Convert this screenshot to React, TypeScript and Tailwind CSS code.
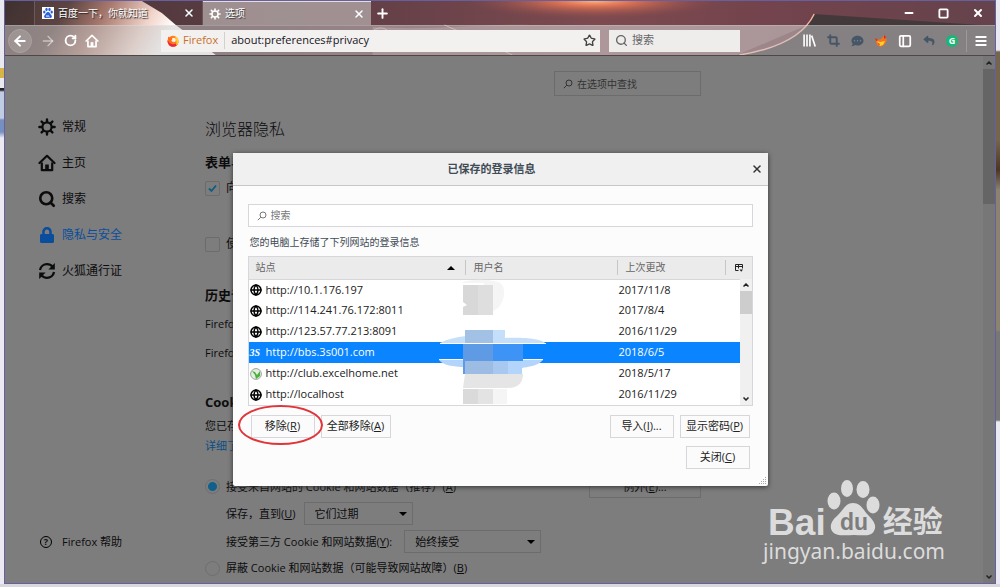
import React from "react";
import {
  Search,
  Plus,
  X,
  Minus,
  Square,
  ArrowLeft,
  ArrowRight,
  RotateCw,
  Star,
  Menu,
  Crop,
  Globe,
  PanelLeft,
} from "lucide-react";
import { FaLock, FaCommentDots, FaReply } from "react-icons/fa";

const sites = [
  { url: "http://10.1.176.197", date: "2017/11/8", icon: "globe" },
  { url: "http://114.241.76.172:8011", date: "2017/8/4", icon: "globe" },
  { url: "http://123.57.77.213:8091", date: "2016/11/29", icon: "globe" },
  { url: "http://bbs.3s001.com", date: "2018/6/5", icon: "3s", selected: true },
  { url: "http://club.excelhome.net", date: "2018/5/17", icon: "excel" },
  { url: "http://localhost", date: "2016/11/29", icon: "globe" },
];

const Gear = ({ className }: { className: string }) => (
  <svg viewBox="0 0 18 18" className={className} fill="none" stroke="currentColor">
    <circle cx="9" cy="9" r="4.6" strokeWidth="2.2" />
    <g strokeWidth="2.4" strokeLinecap="round">
      <path d="M9 1.4v2.4M9 14.2v2.4M1.4 9h2.4M14.2 9h2.4" />
      <path d="M3.6 3.6l1.6 1.6M12.8 12.8l1.6 1.6M3.6 14.4l1.6-1.6M12.8 5.2l1.6-1.6" />
    </g>
  </svg>
);

const House = ({ className }: { className: string }) => (
  <svg viewBox="0 0 18 18" className={className} fill="none" stroke="currentColor">
    <path d="M1.5 9L9 1.8 16.5 9" strokeWidth="2.2" strokeLinecap="round" strokeLinejoin="round" />
    <path d="M3.8 8.5v7.7h10.4V8.5" strokeWidth="2.2" strokeLinejoin="round" />
    <path d="M7.2 16v-5.5h3.6V16z" fill="currentColor" stroke="none" />
  </svg>
);

const SyncIcon = ({ className }: { className: string }) => (
  <svg viewBox="0 0 18 18" className={className} fill="none" stroke="currentColor" strokeWidth="2.3">
    <path d="M2 8c.6-3.500 3.500-5.800 7-5.800 2.400 0 4.300 1 5.600 2.700" />
    <path d="M16 10c-.6 3.500-3.500 5.800-7 5.800-2.400 0-4.300-1-5.600-2.700" />
    <path d="M16.800 1v6.400h-6.400z" fill="currentColor" stroke="none" />
    <path d="M1.200 17v-6.400h6.400z" fill="currentColor" stroke="none" />
  </svg>
);

const SmallSearch = ({ className }: { className: string }) => (
  <svg viewBox="0 0 10 10" className={className} fill="none" stroke="currentColor">
    <circle cx="6" cy="4" r="3" />
    <path d="M3.800 6.200L.8 9.200" />
  </svg>
);

const PawIcon = ({ className }: { className: string }) => (
  <svg viewBox="0 0 12 12" className={className}>
    <rect width="12" height="12" fill="#fff" />
    <g fill="#2a62d8">
      <ellipse cx="2.300" cy="5" rx="1.200" ry="1.600" />
      <ellipse cx="4.500" cy="2.500" rx="1.200" ry="1.700" />
      <ellipse cx="7.500" cy="2.500" rx="1.200" ry="1.700" />
      <ellipse cx="9.700" cy="5" rx="1.200" ry="1.600" />
      <path d="M6 5c2 0 2 2 3.200 3 1.600 1.600.2 3.400-1.600 3H4.400c-1.800.4-3.200-1.400-1.600-3C4 7 4 5 6 5z" />
    </g>
    <path d="M4.500 8.500h1v1.500h-1zM6.500 8v2h1.500" stroke="#fff" strokeWidth=".5" fill="none" />
  </svg>
);

const FirefoxLogo = ({ className }: { className: string }) => (
  <svg viewBox="0 0 12 12" className={className}>
    <circle cx="6" cy="6.300" r="5.500" fill="#ff7a18" />
    <path d="M.6 5C.3 9 3 11.800 6 11.800c3.200 0 5-2 5.500-4.500C9 10 3 10.500.6 5z" fill="#e8283c" />
    <path d="M7.500.5c2 1 4 3 4 5.800 0 2-1 3.500-2.500 4.500 1-3 .5-6-1.500-10.300z" fill="#ffcf2e" />
    <circle cx="6.600" cy="5" r="2.300" fill="#fff4e4" />
    <path d="M.8 3.500l.6-2 1.200 1.300C4 2.500 5 3 5.500 4L4 5.500c.5 1 1.500 1.600 3 1.200-1 1.800-4.500 1.300-5.200-1z" fill="#ff6a1a" />
  </svg>
);

// Lightweight theme artwork behind the tabs and the toolbar
const ThemeArt = () => (
  <svg
    viewBox="0 0 991 54"
    preserveAspectRatio="none"
    className="absolute inset-0 h-full w-full"
    aria-hidden="true"
  >
    <defs>
      <linearGradient id="sky" x1="0" x2="1" y1="0" y2="0">
        <stop offset="0" stopColor="#4a3839" />
        <stop offset=".3" stopColor="#5d3c44" />
        <stop offset=".46" stopColor="#6e444b" />
        <stop offset=".6" stopColor="#7d4a4f" />
        <stop offset=".75" stopColor="#74444d" />
        <stop offset="1" stopColor="#65434c" />
      </linearGradient>
      <linearGradient id="planet" x1="0" x2="1" y1="0" y2=".15">
        <stop offset="0" stopColor="#473736" />
        <stop offset=".3" stopColor="#5b4341" />
        <stop offset=".5" stopColor="#a8796e" />
        <stop offset=".72" stopColor="#f2d5cb" />
        <stop offset=".85" stopColor="#ffffff" />
      </linearGradient>
      <radialGradient id="sun">
        <stop offset="0" stopColor="#ffb27a" />
        <stop offset=".3" stopColor="#f07a55" stopOpacity=".8" />
        <stop offset="1" stopColor="#8c4a4c" stopOpacity="0" />
      </radialGradient>
    </defs>
    <rect width="991" height="54" fill="url(#sky)" />
    <ellipse cx="590" cy="0" rx="130" ry="18" fill="url(#sun)" />
    <path d="M368 26c60 4 110-4 160-2 90 0 200 0 275 0l-70 30H368z" fill="#a07c80" opacity=".6" />
    <path d="M0 0h137l20 12 14 12 40 30H0z" fill="url(#planet)" />
    <path d="M735 54c42-6 65-20 74-41l182 12v29z" fill="#43383a" />
    <path d="M735 54c44-7 66-22 75-41" fill="none" stroke="#f5b5a5" strokeWidth="1.500" />
    <path d="M440 24l68 30M368 30c8-6 14-2 18 2" fill="none" stroke="#e0b8b4" strokeWidth=".8" />
  </svg>
);

const BrowserChrome = () => (
  <header className="relative shrink-0 border-b border-[#514646] text-white">
    <ThemeArt />
    <div className="relative flex h-6 items-stretch text-[10px]">
      <div className="w-[30px] border-r border-[#6b5a5a] bg-black/10" />
      <div className="flex w-[168px] items-center gap-1 border-r border-[#6b5456] px-[7px]">
        <PawIcon className="h-3 w-3 shrink-0" />
        <span className="min-w-0 flex-1 overflow-hidden whitespace-nowrap [text-shadow:1px_1px_1px_#222]">
          百度一下，你就知道
        </span>
        <button aria-label="关闭标签页" className="shrink-0 pl-1">
          <X className="h-3 w-3 [filter:drop-shadow(0_0_1px_#444)]" strokeWidth={3} />
        </button>
      </div>
      <div className="flex w-[168px] items-center gap-1 border-t border-[#e5dcdc] bg-[#b0a5a5]/80 px-[6px]">
        <Gear className="h-3 w-3 shrink-0" />
        <span className="flex-1 [text-shadow:1px_1px_1px_#333]">选项</span>
        <button aria-label="关闭标签页" className="pl-1">
          <X className="h-3 w-3" strokeWidth={3} />
        </button>
      </div>
      <button aria-label="新建标签页" className="px-1">
        <Plus className="h-[15px] w-[15px]" strokeWidth={3} />
      </button>
      <div className="ml-auto flex items-center gap-[23px] pr-[11px]">
        <button aria-label="最小化">
          <Minus className="h-3 w-3" strokeWidth={4} />
        </button>
        <button aria-label="最大化">
          <Square className="h-[11px] w-[11px]" strokeWidth={4} />
        </button>
        <button aria-label="关闭">
          <X className="h-3 w-3" strokeWidth={4} />
        </button>
      </div>
    </div>
    <div className="relative flex h-[30px] items-center border-t border-white/20 bg-[#c8c8c8]/50">
      <div className="flex w-[156px] items-center gap-2 pl-[3px]">
        <button
          aria-label="后退"
          className="flex h-6 w-6 items-center justify-center rounded-full border border-[#aaa0a0] bg-white/15"
        >
          <ArrowLeft className="h-4 w-4" strokeWidth={3} />
        </button>
        <button aria-label="前进" className="text-white/50">
          <ArrowRight className="h-4 w-4" />
        </button>
        <button aria-label="重新载入">
          <RotateCw className="h-[13px] w-[13px]" strokeWidth={3.5} />
        </button>
        <button aria-label="主页">
          <House className="h-[14px] w-[14px]" />
        </button>
      </div>
      <div className="flex h-[22px] w-[439px] items-center bg-[#f3f0f0] pl-[6px] pr-1 text-[#15141a]">
        <FirefoxLogo className="h-3 w-3" />
        <span className="ml-1 border-r border-[#d5d0d0] pr-[6px] text-[11px] text-[#c8702a]">Firefox</span>
        <input
          aria-label="地址栏"
          defaultValue="about:preferences#privacy"
          className="min-w-0 flex-1 bg-transparent pl-[6px] text-[11px] outline-none"
        />
        <Star className="h-[13px] w-[13px] text-[#444]" strokeWidth={2.5} />
      </div>
      <label className="ml-[9px] flex h-[22px] w-[131px] items-center gap-1 bg-[#efecec] px-[6px] text-[#666]">
        <Search className="h-[13px] w-[13px] shrink-0" strokeWidth={2.5} />
        <input
          aria-label="搜索栏"
          placeholder="搜索"
          className="w-full bg-transparent text-[11px] outline-none placeholder:text-[#666]"
        />
      </label>
      <div className="ml-auto flex items-center gap-[11px]">
        <button aria-label="书库">
          <svg viewBox="0 0 12 12" className="h-[13px] w-[13px]" stroke="#fff" strokeWidth="1.5">
            <path d="M1 .5v11M3.700 .5v11M6.400 .5v11M8 1.500l3.300 10" />
          </svg>
        </button>
        <button aria-label="截图" className="text-[#455668]">
          <Crop className="h-[13px] w-[13px]" strokeWidth={3.5} />
        </button>
        <button aria-label="消息" className="text-[#455668]">
          <FaCommentDots className="h-3 w-[13px]" />
        </button>
        <button aria-label="狐狸">
          <svg viewBox="0 0 12 12" className="h-3 w-3">
            <path d="M0 3l3 2 3-1 2-2 1-2 2 2-1 1 2 2-2 4-4 3-4-2z" fill="#f5741c" />
            <path d="M2 6l3 1 5-1-2 4-3 1z" fill="#ffce2d" />
            <path d="M9 0l2 2-2 2zM3 8l2 1-1 1zM0 3l3 2-2 1z" fill="#e02020" />
          </svg>
        </button>
        <button aria-label="侧栏">
          <PanelLeft className="h-[14px] w-[14px]" strokeWidth={3} />
        </button>
        <button aria-label="撤销" className="text-[#455668]">
          <FaReply className="h-[11px] w-3" />
        </button>
        <button
          aria-label="Grammarly"
          className="flex h-3 w-3 items-center justify-center rounded-full bg-[#15b877] text-[9px] font-bold leading-3"
        >
          G
        </button>
      </div>
      <button aria-label="打开菜单" className="ml-2 border-l border-white/20 py-1 pl-[7px] pr-[7px]">
        <Menu className="h-[14px] w-[14px]" strokeWidth={3.5} />
      </button>
    </div>
  </header>
);

const categories = [
  { label: "常规", icon: <Gear className="h-[18px] w-[18px]" /> },
  { label: "主页", icon: <House className="h-[18px] w-[18px]" /> },
  { label: "搜索", icon: <Search className="h-[18px] w-[18px]" strokeWidth={3.5} /> },
  { label: "隐私与安全", icon: <FaLock className="h-4 w-[18px]" />, active: true },
  { label: "火狐通行证", icon: <SyncIcon className="h-[18px] w-[18px]" /> },
];

const Sidebar = () => (
  <nav className="flex w-[200px] shrink-0 flex-col pl-[33px] pt-[53px] text-[12px]">
    {categories.map((c) => (
      <a
        key={c.label}
        href="#"
        className={"flex h-9 items-center gap-[6px] " + (c.active ? "text-[#0a4d9c]" : "text-[#0c0c0d]")}
      >
        {c.icon}
        {c.label}
      </a>
    ))}
    <a href="#" className="mb-[31px] mt-auto flex h-5 items-center gap-[10px] pl-[2px] text-[11px]">
      <span className="flex h-3 w-3 items-center justify-center rounded-full border border-black text-[9px] font-bold leading-3">
        ?
      </span>
      Firefox 帮助
    </a>
  </nav>
);

const CheckBox = ({ id, checked }: { id: string; checked?: boolean }) => (
  <span className="grid h-[15px] w-[15px] shrink-0 place-items-center">
    <input
      id={id}
      type="checkbox"
      defaultChecked={checked}
      className="peer col-start-1 row-start-1 h-[15px] w-[15px] appearance-none rounded-xs border border-[#6c6c6c]"
    />
    <svg
      viewBox="0 0 9 9"
      className="invisible col-start-1 row-start-1 h-[9px] w-[9px] peer-checked:visible"
      fill="none"
      stroke="#105b82"
      strokeWidth="1.800"
    >
      <path d="M1 4.500L3.500 7 8 1.500" />
    </svg>
  </span>
);

const Radio = ({ id, checked }: { id: string; checked?: boolean }) => (
  <input
    id={id}
    type="radio"
    name="cookies"
    defaultChecked={checked}
    className="h-[15px] w-[15px] shrink-0 appearance-none rounded-full border border-[#6f6f6f] checked:bg-[radial-gradient(circle,#10608c_0_4px,transparent_5px)]"
  />
);

const DropDown = ({ id, value, className }: { id: string; value: string; className: string }) => (
  <span className="relative inline-flex">
    <select
      id={id}
      className={"h-[23px] appearance-none border border-[#6c6c6c] bg-transparent pl-[10px] text-[11px] " + className}
    >
      <option>{value}</option>
    </select>
    <svg viewBox="0 0 8 4" className="pointer-events-none absolute right-[6px] top-[10px] h-1 w-2">
      <path d="M0 0h8L4 4z" />
    </svg>
  </span>
);

const Preferences = () => (
  <main className="w-[496px] shrink-0 pt-[15px] text-[12px] leading-5">
    <label className="ml-auto flex h-[25px] w-[147px] items-center gap-1 border border-[#6c6c6c] px-2 text-[#333]">
      <SmallSearch className="h-[10px] w-[10px] shrink-0" />
      <input
        placeholder="在选项中查找"
        aria-label="在选项中查找"
        className="w-full bg-transparent text-[10px] outline-none placeholder:text-[#333]"
      />
    </label>
    <h1 className="mt-[21px] h-6 text-[16px] font-light leading-6">浏览器隐私</h1>
    <h2 className="mt-[11px] text-[13px] font-bold">表单与密码</h2>
    <div className="mt-[6px] flex h-5 items-center gap-[6px]">
      <CheckBox id="ask" checked />
      <label htmlFor="ask">向您询问是否保存密码</label>
    </div>
    <div className="mt-[36px] flex h-5 items-center gap-[6px]">
      <CheckBox id="master" />
      <label htmlFor="master">使用主密码</label>
    </div>
    <h2 className="mt-[31px] text-[13px] font-bold">历史记录</h2>
    <p className="mt-[9px] text-[11px]">Firefox 将记录历史</p>
    <p className="mt-[9px] text-[11px]">Firefox 将记住浏览历史</p>
    <h2 className="mt-[29px] text-[13px] font-bold">Cookie 和网站数据</h2>
    <p className="mt-1 text-[11px]">您已存储的数据</p>
    <a href="#" className="block text-[11px] text-[#0a4d84]">
      详细了解
    </a>
    <div className="mt-[19px] flex items-center gap-[6px]">
      <Radio id="accept" checked />
      <label htmlFor="accept" className="text-[11px]">
        接受来自网站的 Cookie 和网站数据（推荐）(<u>A</u>)
      </label>
      <button className="ml-auto h-[23px] w-28 border border-[#6c6c6c] text-[11px]">
        例外(<u>E</u>)...
      </button>
    </div>
    <div className="mt-1 flex items-center gap-2 pl-[21px]">
      <label htmlFor="keep" className="text-[11px]">
        保存，直到(<u>U</u>)
      </label>
      <DropDown id="keep" value="它们过期" className="w-[109px]" />
    </div>
    <div className="mt-[5px] flex items-center gap-3 pl-[21px]">
      <label htmlFor="third" className="text-[11px]">
        接受第三方 Cookie 和网站数据(<u>Y</u>):
      </label>
      <DropDown id="third" value="始终接受" className="w-[137px]" />
    </div>
    <div className="mt-[5px] flex items-center gap-[6px]">
      <Radio id="block" />
      <label htmlFor="block" className="text-[11px]">
        屏蔽 Cookie 和网站数据（可能导致网站故障）(<u>B</u>)
      </label>
    </div>
  </main>
);

const SiteIcon = ({ kind }: { kind: string }) => {
  if (kind === "3s") {
    return (
      <span className="w-3 shrink-0 font-['Liberation_Serif',serif] text-[10px] font-bold italic leading-3 text-white">
        3S
      </span>
    );
  }
  if (kind === "excel") {
    return (
      <svg viewBox="0 0 12 12" className="h-3 w-3 shrink-0">
        <circle cx="6" cy="6" r="5.400" fill="#e4eee2" stroke="#9aa79a" />
        <path d="M2 3l3 1 2 3 3-4v5l-4 3-1-4z" fill="#4bb03c" />
      </svg>
    );
  }
  return <Globe className="h-3 w-3 shrink-0 text-black" strokeWidth={3} />;
};

// Smudge covering the user name column
const Mosaic = () => (
  <svg viewBox="0 0 110 126" className="pointer-events-none absolute left-[190px] top-[22px] h-[126px] w-[110px]">
    <path d="M22 4c10-4 24-4 37-1 9 3 7 18 1 25-5 5-12 6-15 7V4z" fill="#f5f5f5" />
    <path d="M24 6h15v30H24v-8l4-2-4-3z" fill="#d8d8d8" />
    <path d="M39 6h15v30H39z" fill="#dedede" />
    <path d="M1 64c8-4 16-6 26-7V51h39v8c14-1 38 0 41 6z" fill="#c5defa" />
    <path d="M26 51h28v15H26z" fill="#a3c1e5" />
    <path d="M1 64h106v1H1z" fill="#fff" />
    <path d="M0 81h104c-5 6-16 7-21 8v6H26v-7C14 88 4 86 0 81z" fill="#b4d5fb" />
    <path d="M0 80h104v1H0z" fill="#fff" />
    <path d="M24 65h30v30H24z" fill="#5f9ae5" />
    <path d="M54 65h15v17H54zM69 65h15v17H69z" fill="#3e93f7" />
    <path d="M54 82h15v13H54z" fill="#a8c8ef" />
    <path d="M26 82h28v13H26z" fill="#9dbce3" />
    <path d="M26 95h58c0 9-5 14-16 14H24z" fill="#e5e5e6" />
    <path d="M24 110h15v15H24z" fill="#dadada" />
    <path d="M39 110h15v15H39z" fill="#e3e3e3" />
    <path d="M54 110h14v15H54z" fill="#f5f5f5" />
  </svg>
);

const Chevron = ({ up }: { up?: boolean }) => (
  <svg viewBox="0 0 6 4" className="h-1 w-[6px]" fill="none" stroke="#222" strokeWidth="1.500">
    <path d={up ? "M.5 3.500L3 1l2.500 2.500" : "M.5.5L3 3 5.500.5"} />
  </svg>
);

const LoginTable = () => (
  <div className="relative border border-[#d7d7db] bg-white">
    <table className="w-full table-fixed border-collapse text-[11px] text-[#222]">
      <colgroup>
        <col className="w-[217px]" />
        <col className="w-[152px]" />
        <col />
        <col className="w-[26px]" />
      </colgroup>
      <thead>
        <tr className="h-[22px] border-b border-[#d7d7db] bg-[#ebebeb] text-left text-[10px] text-[#666]">
          <th className="p-0 font-normal">
            <div className="flex items-center justify-between border-r border-[#c6c6c6] pl-[7px] pr-[10px]">
              站点
              <svg viewBox="0 0 8 4" className="h-1 w-2">
                <path d="M0 4h8L4 0z" />
              </svg>
            </div>
          </th>
          <th className="p-0 font-normal">
            <div className="border-r border-[#c6c6c6] pl-2">用户名</div>
          </th>
          <th className="p-0 font-normal">
            <div className="border-r border-[#c6c6c6] pl-2">上次更改</div>
          </th>
          <th className="p-0">
            <button aria-label="选择要显示的列" className="flex w-full justify-center">
              <svg viewBox="0 0 8 8" className="h-2 w-2" fill="none" stroke="#222">
                <path d="M.5 6.500v-6h7v4M.5 2.500h7M3.500.5v4M.5 6.500h3" />
                <path d="M4.500 5.500h3.500L6.200 7.800z" fill="#222" stroke="none" />
              </svg>
            </button>
          </th>
        </tr>
      </thead>
      <tbody>
        {sites.map((s) => (
          <tr key={s.url} className={"h-[21px] " + (s.selected ? "bg-[#0a84ff] text-white" : "")}>
            <td className="p-0 pl-[1px]">
              <div className="flex items-center gap-1">
                <SiteIcon kind={s.icon} />
                {s.url}
              </div>
            </td>
            <td className="p-0" />
            <td className="p-0 pl-[1px]" colSpan={2}>
              {s.date}
            </td>
          </tr>
        ))}
      </tbody>
    </table>
    <div className="absolute bottom-0 right-0 top-[22px] flex w-3 flex-col items-center justify-between bg-[#f0f0f0] pb-1">
      <div className="flex h-3 items-center">
        <Chevron up />
      </div>
      <div className="mb-auto h-[23px] w-full bg-[#cdcdcd]" />
      <Chevron />
    </div>
    <Mosaic />
  </div>
);

const DialogButton = ({ className, children }: { className: string; children: React.ReactNode }) => (
  <button className={"h-[23px] border border-[#d7d7db] bg-[#fbfbfb] text-[11px] text-[#222] " + className}>
    {children}
  </button>
);

const LoginsDialog = () => (
  <section
    role="dialog"
    aria-labelledby="dialog-title"
    className="relative w-[535px] rounded-xs bg-[#fcfcfc] shadow-[0_1px_5px_#333]"
  >
    <div className="flex h-[33px] items-center border-b border-[#c8c8c8] bg-[#f0f0f0] pr-[5px]">
      <h2 id="dialog-title" className="flex-1 text-center text-[11px] font-bold text-[#414b56]">
        已保存的登录信息
      </h2>
      <button aria-label="关闭" className="text-[#333]">
        <X className="h-3 w-3" strokeWidth={3} />
      </button>
    </div>
    <div className="px-[15px] pb-[17px] pt-[18px]">
      <label className="flex h-[23px] items-center gap-1 border border-[#d7d7db] bg-white px-2 text-[#777]">
        <SmallSearch className="h-[10px] w-[10px] shrink-0" />
        <input
          aria-label="搜索登录信息"
          placeholder="搜索"
          className="w-full text-[10px] outline-none placeholder:text-[#777]"
        />
      </label>
      <p className="mb-1 mt-[5px] pl-[2px] text-[10px] leading-5 text-[#414b56]">
        您的电脑上存储了下列网站的登录信息
      </p>
      <LoginTable />
      <div className="mt-[9px] flex gap-[6px] px-[3px]">
        <div className="relative flex">
          <DialogButton className="w-16">
            移除(<u>R</u>)
          </DialogButton>
          <div className="pointer-events-none absolute -bottom-[7px] -left-[13px] -right-[8px] -top-[10px] rounded-[50%] border-2 border-[#e0353a]" />
        </div>
        <DialogButton className="w-[70px]">
          全部移除(<u>A</u>)
        </DialogButton>
        <DialogButton className="ml-auto w-16">
          导入(<u>I</u>)...
        </DialogButton>
        <DialogButton className="w-[70px]">
          显示密码(<u>P</u>)
        </DialogButton>
      </div>
      <div className="mt-2 flex justify-end px-[3px]">
        <DialogButton className="w-16">
          关闭(<u>C</u>)
        </DialogButton>
      </div>
    </div>
    <svg viewBox="0 0 8 8" className="absolute bottom-px right-px h-2 w-2" fill="#aaa">
      <path d="M6 0h1v1H6zM4 2h1v1H4zM6 2h1v1H6zM2 4h1v1H2zM4 4h1v1H4zM6 4h1v1H6zM0 6h1v1H0zM2 6h1v1H2zM4 6h1v1H4zM6 6h1v1H6z" />
    </svg>
  </section>
);

const Watermark = () => (
  <div className="pointer-events-none absolute bottom-[18px] right-[50px] text-[#dcdcdc]">
    <div className="flex items-end pl-[5px] font-['Liberation_Sans','Noto_Sans_CJK_SC',sans-serif] font-bold">
      <span className="text-[37px] leading-7">Bai</span>
      <svg viewBox="0 0 54 58" className="h-[58px] w-[54px]">
        <g fill="#dcdcdc">
          <ellipse cx="8" cy="22" rx="6.500" ry="8.500" />
          <ellipse cx="21" cy="9.500" rx="6" ry="8.500" />
          <ellipse cx="37" cy="10.500" rx="6.500" ry="8.500" />
          <ellipse cx="47" cy="26" rx="6.500" ry="8.500" />
          <path d="M27 24c8 0 10 7 16 13 5 5 8 10 5 15-3 6-12 4-20 4s-18 2-22-4c-3-5 0-11 5-15 6-5 8-13 16-13z" />
        </g>
        <text x="28" y="51" textAnchor="middle" fontSize="23" fontWeight="700" fill="#7d7d7d">
          du
        </text>
      </svg>
      <span className="ml-[3px] text-[30px] leading-[30px]">经验</span>
    </div>
    <div className="font-['Noto_Sans',sans-serif] text-[21px] leading-7">jingyan.baidu.com</div>
  </div>
);

const App = () => {
  return (
    <div className="flex h-screen overflow-hidden bg-[#d9d8df] pb-[3px] font-['Open_Sans','Noto_Sans_CJK_SC',sans-serif] text-[#0c0c0d]">
      <div className="w-1 shrink-0 bg-[linear-gradient(#e9e9f2_0_68px,#d5b448_68px_78px,#e9e9f2_78px_88px,#222_88px_90px,#c0cce4_92px_118px,#7590c0_120px_132px,#ece9f4_138px)]" />
      <div className="flex min-w-0 flex-1 flex-col border border-[#6660a0]">
        <BrowserChrome />
        <div className="relative flex min-h-0 flex-1 bg-[#7d7d7d]">
          <Sidebar />
          <Preferences />
          <div className="ml-auto flex w-3 shrink-0 flex-col items-center bg-[#777]">
            <div className="flex h-[13px] items-center">
              <Chevron up />
            </div>
            <div className="h-[135px] w-full bg-[#656565]" />
            <div className="mb-1 mt-auto">
              <Chevron />
            </div>
          </div>
          <div className="absolute inset-0 flex items-center justify-center">
            <LoginsDialog />
          </div>
          <Watermark />
        </div>
      </div>
      <div className="w-1 shrink-0 bg-[linear-gradient(#e9e9f2_0_50px,#75654c_52px_140px,#4d3524_170px,#8b8270_190px_330px,#777_332px_420px,#e9e9f2_422px)]" />
    </div>
  );
};

export default App;
